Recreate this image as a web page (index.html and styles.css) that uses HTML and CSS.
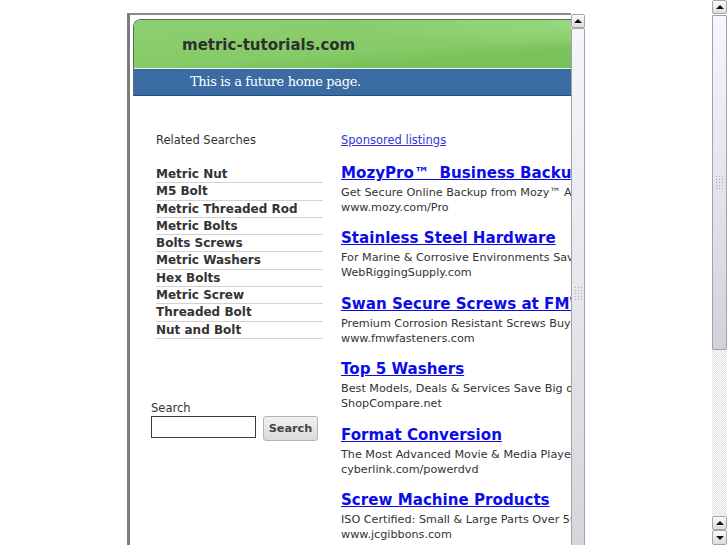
FILE: index.html
```html
<!DOCTYPE html>
<html>
<head>
<meta charset="utf-8">
<title>metric-tutorials.com</title>
<link rel="stylesheet" href="styles.css">
</head>
<body>
<div class="screen">
  <div class="viewport">
    <div class="frame">
      <div class="doc">
        <div class="page">
          <div class="header">
            <div class="brand">metric-tutorials.com</div>
            <div class="tagline">This is a future home page.</div>
          </div>
          <div class="content">
            <div class="left">
              <div class="rel-title">Related Searches</div>
              <ul class="rel-list">
                <li><a href="#">Metric Nut</a></li>
                <li><a href="#">M5 Bolt</a></li>
                <li><a href="#">Metric Threaded Rod</a></li>
                <li><a href="#">Metric Bolts</a></li>
                <li><a href="#">Bolts Screws</a></li>
                <li><a href="#">Metric Washers</a></li>
                <li><a href="#">Hex Bolts</a></li>
                <li><a href="#">Metric Screw</a></li>
                <li><a href="#">Threaded Bolt</a></li>
                <li><a href="#">Nut and Bolt</a></li>
              </ul>
              <form class="search">
                <label class="search-label" for="q">Search</label>
                <div class="search-row">
                  <input id="q" class="search-input" type="text">
                  <button class="search-btn" type="button">Search</button>
                </div>
              </form>
            </div>
            <div class="right">
              <a class="sponsored" href="#">Sponsored listings</a>
              <div class="ad">
                <a class="ad-title" href="#">MozyPro™  Business Backup</a>
                <div class="ad-desc">Get Secure Online Backup from Mozy™ Award-Winning Protection</div>
                <div class="ad-url">www.mozy.com/Pro</div>
              </div>
              <div class="ad">
                <a class="ad-title" href="#">Stainless Steel Hardware</a>
                <div class="ad-desc">For Marine &amp; Corrosive Environments Save Up To 50%</div>
                <div class="ad-url">WebRiggingSupply.com</div>
              </div>
              <div class="ad">
                <a class="ad-title" href="#">Swan Secure Screws at FMW</a>
                <div class="ad-desc">Premium Corrosion Resistant Screws Buy Online Today</div>
                <div class="ad-url">www.fmwfasteners.com</div>
              </div>
              <div class="ad">
                <a class="ad-title" href="#">Top 5 Washers</a>
                <div class="ad-desc">Best Models, Deals &amp; Services Save Big on Washers</div>
                <div class="ad-url">ShopCompare.net</div>
              </div>
              <div class="ad">
                <a class="ad-title" href="#">Format Conversion</a>
                <div class="ad-desc">The Most Advanced Movie &amp; Media Player Software</div>
                <div class="ad-url">cyberlink.com/powerdvd</div>
              </div>
              <div class="ad">
                <a class="ad-title" href="#">Screw Machine Products</a>
                <div class="ad-desc">ISO Certified: Small &amp; Large Parts Over 50 Years</div>
                <div class="ad-url">www.jcgibbons.com</div>
              </div>
            </div>
          </div>
        </div>
      </div>
      <div class="vscroll vscroll-inner">
        <div class="sb-btn"><span class="tri-up"></span></div>
        <div class="sb-thumb sb-thumb-inner"><span class="grip"></span></div>
      </div>
    </div>
  </div>
  <div class="vscroll vscroll-outer">
    <div class="sb-btn"><span class="tri-up"></span></div>
    <div class="sb-thumb sb-thumb-outer"><span class="grip"></span></div>
    <div class="sb-track"></div>
    <div class="sb-btn"><span class="tri-up"></span></div>
    <div class="sb-btn"><span class="tri-down"></span></div>
  </div>
</div>
</body>
</html>
```
FILE: styles.css
```css
* { box-sizing: border-box; }
html, body { margin: 0; padding: 0; background: #fff; }
body { font-family: "DejaVu Sans", Verdana, sans-serif; }

.screen {
  width: 727px;
  height: 545px;
  display: flex;
  overflow: hidden;
}

.viewport {
  width: 712px;
  height: 545px;
  overflow: hidden;
  padding: 13px 0 0 127px;
}

.frame {
  width: 458px;
  height: 560px;
  display: flex;
}

.doc {
  width: 444px;
  height: 100%;
  overflow: hidden;
  border-top: 2px solid #8a8a8a;
  border-left: 3px solid #7b7b7b;
}

.page {
  width: 760px;
  padding: 4px 0 0 3px;
}

/* header */
.header {
  width: 700px;
  border: 1px solid #5f6a5f;
  border-bottom: none;
  border-right: none;
  border-radius: 8px 0 0 0;
  overflow: hidden;
}
.brand {
  height: 49px;
  padding: 3px 0 0 48px;
  line-height: 45px;
  font-size: 15px;
  font-weight: bold;
  color: #2f2f2f;
  background:
    radial-gradient(ellipse 55% 70% at 70% 10%, rgba(170, 228, 150, 0.55), rgba(170, 228, 150, 0) 70%),
    linear-gradient(176deg, #8ccf6f 0%, #86cb68 48%, #7ac35c 62%, #77c159 100%);
  border-bottom: 1px solid #eef7ea;
}
.tagline {
  height: 27px;
  padding-left: 56px;
  line-height: 26px;
  font-family: "DejaVu Serif", "Liberation Serif", serif;
  font-size: 13px;
  letter-spacing: -0.35px;
  color: #fff;
  background: #3a6ca3;
  border-bottom: 1px solid #214d7c;
}

/* content */
.content {
  display: flex;
  gap: 18px;
  padding: 37px 0 0 18px;
}
.left {
  width: 172px;
  flex: none;
}
.rel-title {
  padding-left: 5px;
  font-size: 11.5px;
  line-height: 15px;
  color: #333;
}
.rel-list {
  list-style: none;
  margin: 18px 0 0 5px;
  padding: 0;
  width: 167px;
}
.rel-list li {
  border-bottom: 1px solid #d2d2d2;
  font-size: 12px;
  line-height: 16.3px;
}
.rel-list a {
  font-size: 12px;
  font-weight: bold;
  color: #333;
  text-decoration: none;
}

.search {
  margin-top: 62px;
}
.search-label {
  display: block;
  font-size: 11.5px;
  line-height: 15px;
  color: #333;
}
.search-row {
  display: flex;
  align-items: flex-start;
  gap: 7px;
}
.search-input {
  width: 105px;
  height: 22px;
  margin: 0;
  border: 1px solid #3a3a3a;
  background: #fff;
  padding: 0;
}
.search-btn {
  width: 55px;
  height: 25px;
  margin: 0;
  padding: 0;
  border: 1px solid #b4b4b4;
  border-radius: 3px;
  background: linear-gradient(#f2f2f2, #dadada);
  font-family: "DejaVu Sans", sans-serif;
  font-size: 11.3px;
  font-weight: bold;
  color: #444;
}

.right {
  white-space: nowrap;
}
.sponsored {
  display: block;
  font-size: 11.5px;
  line-height: 15px;
  color: #3434dc;
  margin-bottom: 15px;
}
.ad {
  margin-bottom: 13.4px;
}
.ad-title {
  display: block;
  font-size: 15.1px;
  font-weight: bold;
  line-height: 21px;
  color: #0c0ce8;
  white-space: pre;
}
.ad-desc {
  margin-top: 1px;
}
.ad-desc, .ad-url {
  font-size: 11.2px;
  line-height: 15px;
  color: #333;
}

/* fake scrollbars */
.vscroll {
  display: flex;
  flex-direction: column;
  flex: none;
}
.vscroll-inner {
  width: 14px;
  margin-top: 1px;
  height: 545px;
}
.vscroll-outer {
  width: 15px;
  height: 545px;
}
.sb-btn {
  height: 14px;
  flex: none;
  border: 1px solid #a6a6a6;
  border-radius: 2px;
  background: linear-gradient(#fbfbfb, #dcdcdc);
  display: flex;
  align-items: center;
  justify-content: center;
}
.vscroll-outer .sb-btn:last-child { height: 15px; }
.tri-up {
  width: 0;
  height: 0;
  border-left: 4px solid transparent;
  border-right: 4px solid transparent;
  border-bottom: 4px solid #111;
}
.tri-down {
  width: 0;
  height: 0;
  border-left: 4px solid transparent;
  border-right: 4px solid transparent;
  border-top: 4px solid #111;
}
.sb-thumb {
  border: 1px solid #a2a2aa;
  border-radius: 1px;
  display: flex;
  align-items: center;
  justify-content: center;
}
.sb-thumb-inner {
  flex: 1;
  background: linear-gradient(#f5f5fc, #e6e6ec 50%, #d4d4da);
}
.sb-thumb-outer {
  height: 335px;
  flex: none;
  margin-top: 1px;
  background: linear-gradient(#f6f6fd, #e4e4ea 50%, #d2d2d8);
}
.grip {
  width: 9px;
  height: 15px;
  background-image: radial-gradient(circle, #a9a9b0 0.75px, rgba(0,0,0,0) 1px);
  background-size: 3px 3px;
}
.sb-track {
  flex: 1;
  background: repeating-conic-gradient(#e4e4e4 0 25%, #fafafa 0 50%) 0 0 / 2px 2px;
}
```
